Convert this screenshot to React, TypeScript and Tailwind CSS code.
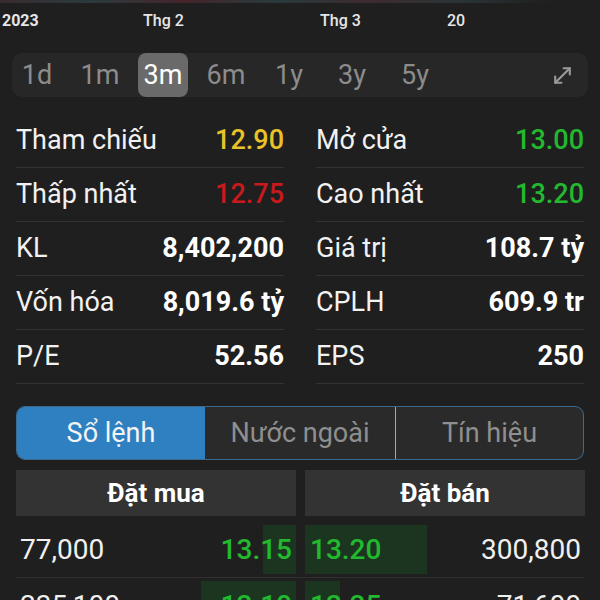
import React from 'react';
import { MoveDiagonal } from 'lucide-react';

const ranges = ['1d', '1m', '3m', '6m', '1y', '3y', '5y'];

const leftStats = [
    { label: 'Tham chiếu', value: '12.90', color: 'text-[#e8c228]', bold: false },
    { label: 'Thấp nhất', value: '12.75', color: 'text-[#c8191c]', bold: false },
    { label: 'KL', value: '8,402,200', color: 'text-white', bold: true },
    { label: 'Vốn hóa', value: '8,019.6 tỷ', color: 'text-white', bold: true },
    { label: 'P/E', value: '52.56', color: 'text-white', bold: true },
];

const rightStats = [
    { label: 'Mở cửa', value: '13.00', color: 'text-[#22b92f]', bold: false },
    { label: 'Cao nhất', value: '13.20', color: 'text-[#22b92f]', bold: false },
    { label: 'Giá trị', value: '108.7 tỷ', color: 'text-white', bold: true },
    { label: 'CPLH', value: '609.9 tr', color: 'text-white', bold: true },
    { label: 'EPS', value: '250', color: 'text-white', bold: true },
];

const orders = [
    { buyVol: '77,000', buy: '13.15', buyBar: 33, sell: '13.20', sellBar: 122, sellVol: '300,800' },
    { buyVol: '235,100', buy: '13.10', buyBar: 95, sell: '13.25', sellBar: 35, sellVol: '71,600' },
];

function StatColumn({ rows }: { rows: typeof leftStats }) {
    return (
        <div className="flex flex-col">
            {rows.map((r) => (
                <div key={r.label} className="h-[54px] flex items-center justify-between border-b border-[#333333]">
                    <span className="text-[27px] text-[#f2f2f2]">{r.label}</span>
                    <span className={`text-[27px] ${r.bold ? 'font-bold' : 'font-medium'} ${r.color}`}>{r.value}</span>
                </div>
            ))}
        </div>
    );
}

export default function App() {
    return (
        <div className="w-[600px] h-[600px] overflow-hidden bg-[#1f1f1f] font-['Roboto',sans-serif]">
            {/* chart remnant */}
            <div className="h-[3px] bg-[linear-gradient(90deg,#3a2a2e,#2a3a3e,#45242a,#263a3c,#3d2a2f,#2a3436,#1f1f1f_92%)]"></div>

            {/* axis labels */}
            <div className="h-[36px] flex items-center text-[16px] text-[#e6e6e6]">
                <span className="w-[143px] pl-[2px] font-bold">2023</span>
                <span className="w-[177px] font-medium">Thg 2</span>
                <span className="w-[127px] font-medium">Thg 3</span>
                <span className="font-medium">20</span>
            </div>

            {/* range selector */}
            <div className="mx-[12px] mt-[14px] h-[44px] rounded-[10px] bg-[#272727] flex items-center pr-[13px]">
                <div className="flex items-center gap-[13px] flex-1">
                    {ranges.map((r) => (
                        <div
                            key={r}
                            className={`w-[50px] h-[44px] flex items-center justify-center rounded-[8px] text-[27px] ${
                                r === '3m' ? 'bg-[#6a6a6a] text-white' : 'text-[#8c8c8c]'
                            }`}
                        >
                            {r}
                        </div>
                    ))}
                </div>
                <MoveDiagonal className="w-[25px] h-[25px] text-[#9a9a9a]" strokeWidth={2} />
            </div>

            {/* stats */}
            <div className="mt-[17px] px-[16px] grid grid-cols-2 gap-x-[32px]">
                <StatColumn rows={leftStats} />
                <StatColumn rows={rightStats} />
            </div>

            {/* tabs */}
            <div className="mx-[16px] mt-[22px] h-[54px] flex rounded-[9px] border-[1.5px] border-[#3d6a8c] overflow-hidden bg-[#2a2a2a] text-[27px]">
                <div className="w-[188px] bg-[#2f80c1] text-[#f4f4f4] flex items-center justify-center">Sổ lệnh</div>
                <div className="w-[191px] text-[#8f8f8f] flex items-center justify-center border-r border-[#a8a8a8]">Nước ngoài</div>
                <div className="flex-1 text-[#8f8f8f] flex items-center justify-center">Tín hiệu</div>
            </div>

            {/* order book */}
            <div className="mt-[10px] px-[16px] grid grid-cols-[280px_280px] gap-x-[9px]">
                <div className="h-[46px] bg-[#333333] flex items-center justify-center text-[26px] font-bold text-white">Đặt mua</div>
                <div className="h-[46px] bg-[#333333] flex items-center justify-center text-[26px] font-bold text-white">Đặt bán</div>
            </div>
            <div className="mt-[6px] px-[16px] flex flex-col">
                {orders.map((o) => (
                    <div key={o.buyVol} className="h-[56px] grid grid-cols-[280px_280px] gap-x-[9px] border-b border-[#303030]">
                        <div className="relative flex items-center justify-between pl-[4px] pr-[4px]">
                            <div className="absolute right-0 top-[3px] bottom-[3px] bg-[#1c3520]" style={{ width: o.buyBar }}></div>
                            <span className="relative text-[28px] text-[#f0f0f0]">{o.buyVol}</span>
                            <span className="relative text-[28px] font-medium text-[#22b92f]">{o.buy}</span>
                        </div>
                        <div className="relative flex items-center justify-between pl-[5px] pr-[4px]">
                            <div className="absolute left-0 top-[3px] bottom-[3px] bg-[#1c3520]" style={{ width: o.sellBar }}></div>
                            <span className="relative text-[28px] font-medium text-[#22b92f]">{o.sell}</span>
                            <span className="relative text-[28px] text-[#f0f0f0]">{o.sellVol}</span>
                        </div>
                    </div>
                ))}
            </div>
        </div>
    );
}
